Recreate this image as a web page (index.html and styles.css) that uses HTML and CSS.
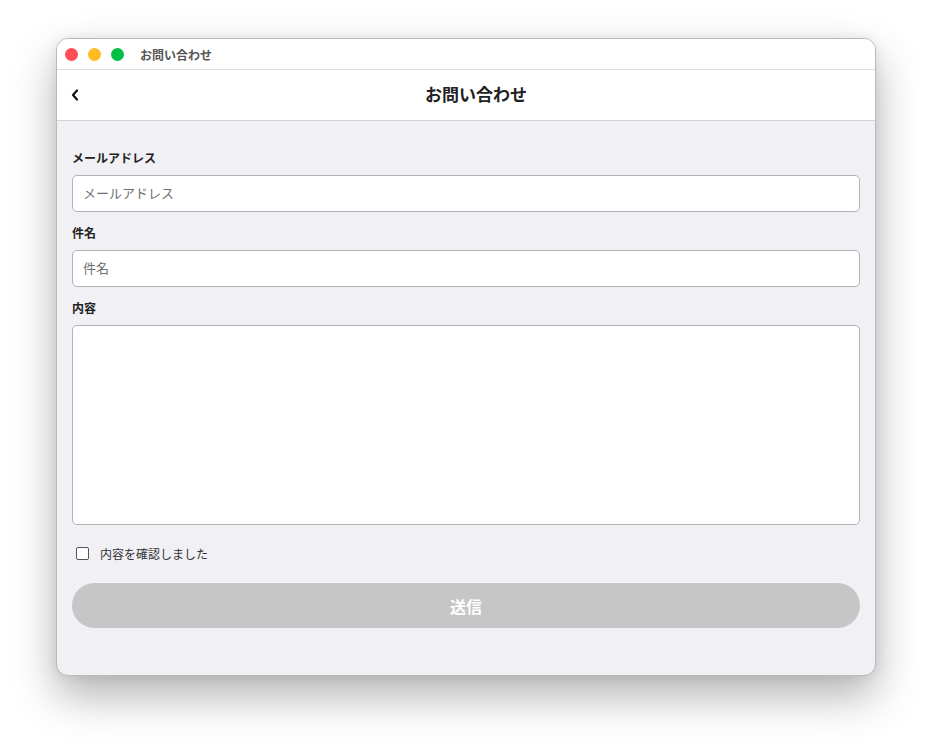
FILE: index.html
```html
<!DOCTYPE html>
<html lang="ja">
<head>
  <meta charset="UTF-8">
  <meta name="viewport" content="width=device-width, initial-scale=1.0">
  <title>お問い合わせ</title>
  <link rel="stylesheet" href="styles.css">
</head>
<body>
    <div class="window">
        <div class="titlebar">
            <span class="light red"></span>
            <span class="light yellow"></span>
            <span class="light green"></span>
            <span class="window-title">お問い合わせ</span>
        </div>
        <div class="header">
            <button class="back-button" aria-label="戻る">
                <svg width="8" height="12" viewBox="0 0 8 12">
                    <path d="M6 1.5 L2 6 L6 10.5" fill="none" stroke="#111" stroke-width="2.2" stroke-linecap="round" stroke-linejoin="round"/>
                </svg>
            </button>
            <h1 class="page-title">お問い合わせ</h1>
        </div>
        <form class="form">
            <label class="field-label" for="email">メールアドレス</label>
            <input class="field" id="email" type="email" placeholder="メールアドレス">

            <label class="field-label" for="subject">件名</label>
            <input class="field" id="subject" type="text" placeholder="件名">

            <label class="field-label" for="body">内容</label>
            <textarea class="field textarea" id="body"></textarea>

            <label class="confirm">
                <input type="checkbox" class="confirm-box">
                <span>内容を確認しました</span>
            </label>

            <button type="button" class="submit-button" disabled>送信</button>
        </form>
    </div>
</body>
</html>
```

FILE: styles.css
```css
html {
    min-height: 100%;
    background-color: #ffffff;
}
body {
    margin: 0;
    padding: 38px 56px 70px 56px;
    font-family: "Noto Sans CJK JP", "Noto Sans", sans-serif;
}
.window {
    width: 820px;
    height: 638px;
    box-sizing: border-box;
    border: 1px solid #b9b9b9;
    border-radius: 12px;
    overflow: hidden;
    background-color: #f0f0f5;
    box-shadow: 0 20px 44px rgba(0, 0, 0, 0.3), 0 0 12px rgba(0, 0, 0, 0.08);
}
.titlebar {
    display: flex;
    align-items: center;
    height: 30px;
    padding-left: 8px;
    background-color: #ffffff;
    border-bottom: 1px solid #dedede;
}
.light {
    width: 13px;
    height: 13px;
    border-radius: 50%;
    margin-right: 10px;
}
.red { background-color: #ff4b55; }
.yellow { background-color: #ffbb22; }
.green { background-color: #00bf44; }
.window-title {
    margin-left: 6px;
    font-size: 12px;
    font-weight: bold;
    color: #555555;
}
.header {
    position: relative;
    display: flex;
    align-items: center;
    justify-content: center;
    height: 50px;
    padding-left: 20px;
    background-color: #ffffff;
    border-bottom: 1px solid #d3d3d3;
}
.back-button {
    position: absolute;
    left: 14px;
    top: 19px;
    padding: 0;
    border: none;
    background: none;
    line-height: 0;
}
.page-title {
    margin: 0 0 3px 0;
    font-size: 17px;
    font-weight: bold;
    color: #222222;
}
.form {
    display: flex;
    flex-direction: column;
    padding: 28px 15px 0 15px;
}
.field-label {
    font-size: 12px;
    line-height: 18px;
    font-weight: bold;
    color: #222222;
    margin-bottom: 8px;
}
.field {
    box-sizing: border-box;
    height: 37px;
    margin: 0 0 12px 0;
    padding: 0 10px 2px 10px;
    border: 1px solid #b3b3b3;
    border-radius: 5px;
    background-color: #ffffff;
    font-family: inherit;
    font-size: 13px;
    color: #222222;
}
.field::placeholder {
    color: #6e6e6e;
}
.textarea {
    height: 200px;
    margin-bottom: 22px;
    resize: none;
}
.confirm {
    display: flex;
    align-items: center;
    height: 13px;
    padding-left: 4px;
    font-size: 12px;
    color: #333333;
}
.confirm-box {
    appearance: none;
    width: 13px;
    height: 13px;
    margin: 0 11px 0 0;
    border: 1px solid #555555;
    border-radius: 2px;
    background-color: #ffffff;
}
.submit-button {
    height: 45px;
    margin-top: 23px;
    border: none;
    border-radius: 23px;
    background-color: #c6c6c6;
    color: #ffffff;
    font-family: inherit;
    font-size: 16px;
    font-weight: bold;
}
```
